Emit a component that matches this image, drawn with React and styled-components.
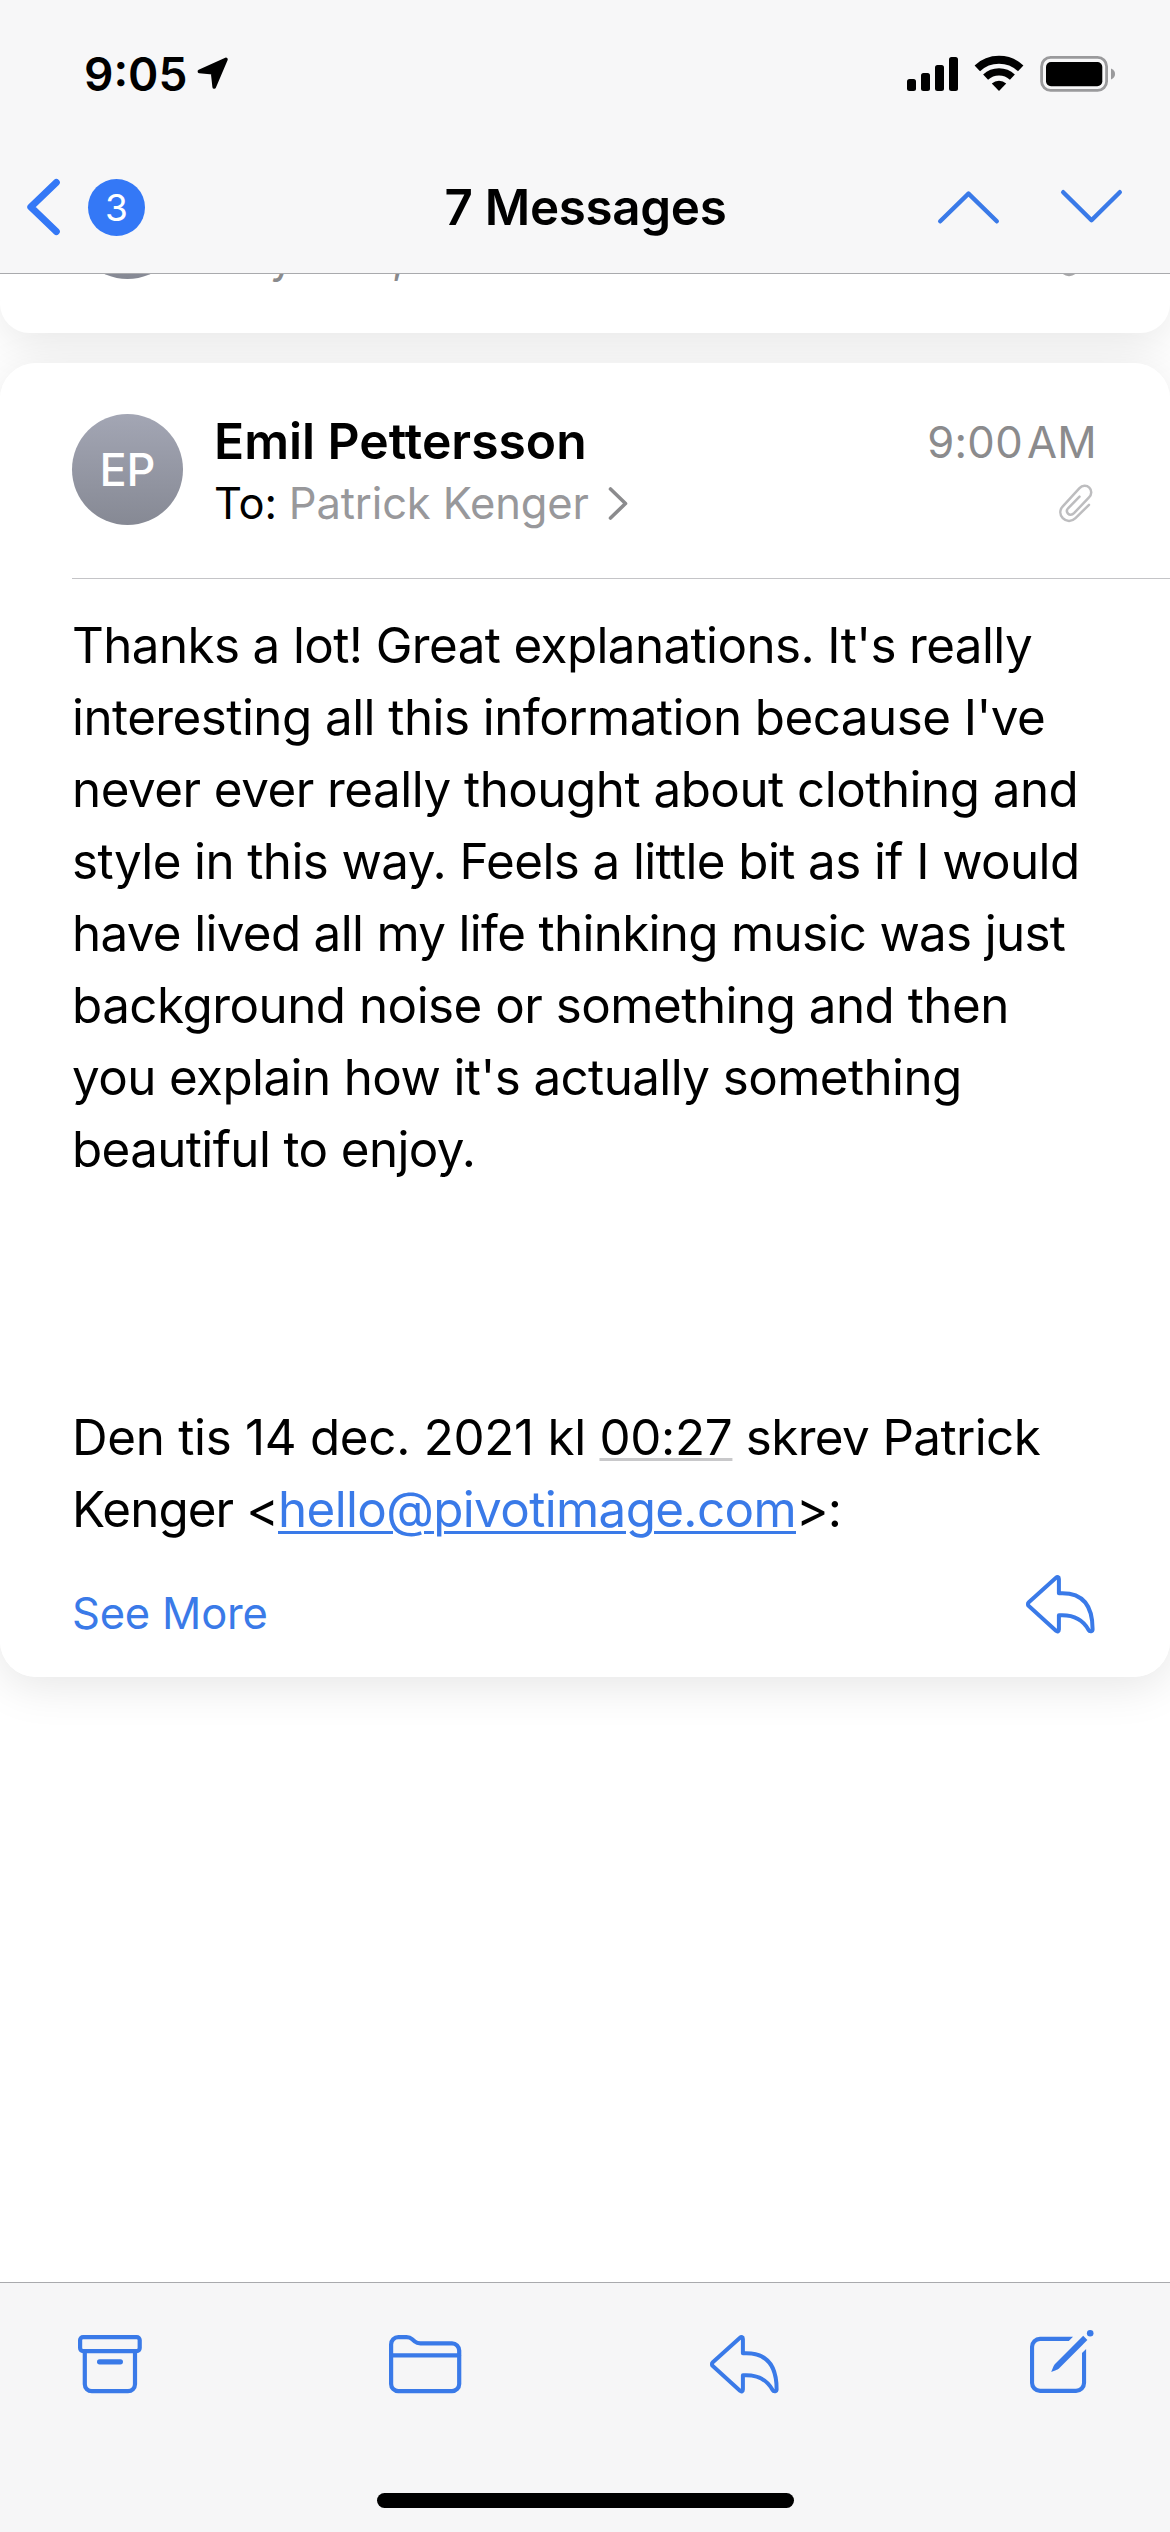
import React from "react";
import styled, { createGlobalStyle } from "styled-components";

const blue = "#3a7ae8";

const GlobalStyle = createGlobalStyle`
  * {
    box-sizing: border-box;
  }
  body {
    margin: 0;
    background: #fff;
  }
`;

const Screen = styled.div`
  width: 1170px;
  height: 2532px;
  display: flex;
  flex-direction: column;
  overflow: hidden;
  background: #fff;
  color: #000;
  font-family: Inter, "Liberation Sans", sans-serif;
  white-space: nowrap;
`;

const Header = styled.header`
  flex: none;
  height: 274px;
  background: #f7f7f8;
  border-bottom: 1px solid #a9aaad;
`;

const StatusBar = styled.div`
  height: 148px;
  padding: 0 54px 0 84px;
  display: flex;
  align-items: center;
  justify-content: space-between;
`;

const StatusGroup = styled.div`
  display: flex;
  align-items: center;
`;

const Clock = styled.span`
  font-size: 46px;
  font-weight: 600;
  line-height: 60px;
  margin-right: 9px;
`;

const NavBar = styled.nav`
  height: 125px;
  padding: 0 47px 7px 25px;
  display: grid;
  grid-template-columns: 1fr auto 1fr;
  align-items: center;
`;

const NavSide = styled.div`
  display: flex;
  align-items: center;
  justify-content: ${(p) => (p.$end ? "flex-end" : "flex-start")};
  gap: ${(p) => p.$gap}px;
`;

const Badge = styled.span`
  width: 57px;
  height: 57px;
  border-radius: 50%;
  display: flex;
  align-items: center;
  justify-content: center;
  background: #3478f6;
  color: #fff;
  font-size: 37px;
`;

const Title = styled.h1`
  margin: 0 0 0 23px;
  font-size: 49.3px;
  font-weight: 600;
  line-height: 64px;
  letter-spacing: -0.3px;
`;

const Thread = styled.main`
  flex: 1;
  min-height: 0;
  display: flex;
  flex-direction: column;
  gap: 30px;
  overflow: hidden;
  isolation: isolate;
`;

/* the shadow sits behind every card, so neighbours never shade each other */
const Card = styled.article`
  flex: none;
  position: relative;
  background: #fff;
  border-radius: ${(p) => (p.$cut ? "0 0 36px 36px" : "36px")};

  &::before {
    content: "";
    position: absolute;
    inset: 0;
    z-index: -1;
    border-radius: 36px;
    box-shadow: 0 9px 46px rgba(0, 0, 0, 0.1);
  }
`;

/* collapsed message, scrolled mostly under the header */
const Peek = styled.div`
  height: 59px;
  padding: 0 72px 0;
  display: flex;
  align-items: flex-end;
  overflow: hidden;
`;

const PeekText = styled.span`
  margin: 0 auto 45px 30px;
  font-size: 43.5px;
  line-height: 62px;
  color: #8a8a8c;
`;

const CardHead = styled.div`
  height: 216px;
  margin-left: 72px;
  padding: 47px 72px 0 0;
  display: flex;
  border-bottom: 1px solid #c4c4c7;
`;

const Avatar = styled.div`
  flex: none;
  width: 111px;
  height: 111px;
  margin: ${(p) => (p.$peek ? "0 0 54px" : "4px 0 0")};
  border-radius: 50%;
  display: flex;
  align-items: center;
  justify-content: center;
  background: linear-gradient(#a3a6b4, #868994);
  color: #fff;
  font-size: 45px;
  font-weight: 500;
`;

const People = styled.div`
  margin-left: 31px;
  flex: 1;
`;

const Name = styled.div`
  font-size: 49.8px;
  font-weight: 600;
  line-height: 62px;
`;

const To = styled.div`
  display: flex;
  align-items: center;
  font-size: 43.5px;
  line-height: 62px;
  letter-spacing: -0.15px;
`;

const Recipient = styled.span`
  margin: 0 19px 0 12px;
  color: #98989b;
`;

const Meta = styled.div`
  display: flex;
  flex-direction: column;
  align-items: flex-end;
`;

const Time = styled.div`
  display: flex;
  gap: 4px;
  margin-top: 2px;
  margin-right: 1px;
  font-size: 43.6px;
  line-height: 62px;
  letter-spacing: 0.3px;
  color: #8b8b8d;
`;

const Clip = styled.svg`
  flex: none;
  margin: ${(p) => (p.$peek ? "0 5px 56px 0" : "10px 5px 0 0")};
  fill: none;
  stroke: ${(p) => (p.$peek ? "#a6a6a8" : "#bdbdbf")};
  stroke-width: 2.5;
  stroke-linecap: round;
`;

const Body = styled.div`
  padding: 30px 72px 0;
  font-size: 49.3px;
  line-height: 72px;
`;

const Line = styled.div`
  height: 72px;
  letter-spacing: ${(p) => p.$track}px;
`;

const Part = styled.span`
  letter-spacing: ${(p) => p.$track}px;
`;

const DataTime = styled(Part)`
  text-decoration: underline 3px #c8c8ca;
  text-underline-offset: 3px;
`;

const Mail = styled.a`
  color: ${blue};
  letter-spacing: -0.62px;
  text-decoration: underline 3px;
  text-underline-offset: 4px;
`;

const CardFoot = styled.div`
  height: 132px;
  padding: 0 71px 14px 72px;
  display: flex;
  align-items: center;
  justify-content: space-between;
`;

const SeeMore = styled.span`
  padding-top: 17px;
  font-size: 43.5px;
  letter-spacing: -0.2px;
  color: ${blue};
`;

const Toolbar = styled.footer`
  flex: none;
  height: 250px;
  border-top: 1px solid #a9aaad;
  background: #f6f6f7;
  display: flex;
  flex-direction: column;
  align-items: center;
  justify-content: space-between;
  padding-bottom: 24px;
`;

const Actions = styled.div`
  width: 100%;
  padding: 47px 76px 0 78px;
  display: flex;
  align-items: flex-end;
  justify-content: space-between;
`;

const HomeBar = styled.div`
  width: 417px;
  height: 15px;
  border-radius: 8px;
  background: #000;
`;

const Stroked = styled.svg`
  display: block;
  overflow: visible;
  fill: none;
  stroke: ${(p) => p.$color || blue};
  stroke-width: ${(p) => p.$w || 4.2};
  stroke-linecap: round;
  stroke-linejoin: round;
`;

const Location = styled.svg`
  display: block;
`;

function Reply() {
  return (
    <Stroked width="73" height="59" viewBox="0 0 73 59" $w={4}>
      <path d="M30 2.7 L2.8 27.2 a2.6 2.6 0 0 0 0 3.9 L30 55.8 c1.4 1.2 2.9.6 2.9-1.2 V40.3 h3.4 C48 40.3 56.5 44 62.6 55 c1.2 2.1 4 1.6 4-.8 C66.6 30 56 18.3 36.3 18.3 H32.9 V3.9 c0-1.8-1.5-2.4-2.9-1.2 z" />
    </Stroked>
  );
}

function Paperclip({ peek }) {
  return (
    <Clip $peek={peek} width="34" height="39" viewBox="0 0 34 39">
      <path d="M30 20.8 L16.5 34.2 C12.7 38 7 37.6 3.8 34.2 C.4 30.4.6 25.8 3.8 22.4 L20.5 4.2 C23.3 1.2 27.6 1.1 30.3 3.6 C33 6.2 32.8 10.6 30 13.4 L15 29.2 C13 31.2 10.5 31.2 9 29.6 C7.5 28 7.6 25.8 9.3 24 L20.5 12.7" />
    </Clip>
  );
}

function StatusIcons() {
  return (
    <svg width="210" height="38" viewBox="906 55 210 38">
      <rect x="907" y="79" width="9" height="12" rx="2.5" />
      <rect x="921" y="73" width="9" height="18" rx="2.5" />
      <rect x="935" y="65" width="9" height="26" rx="2.5" />
      <rect x="949" y="57" width="9" height="34" rx="2.5" />
      <g fill="none" stroke="#000">
        <path d="M977.3 68.3 A31.8 31.8 0 0 1 1020.7 68.3" strokeWidth="8" />
        <path d="M985.6 77.2 A19.6 19.6 0 0 1 1012.4 77.2" strokeWidth="7.2" />
      </g>
      <path d="M991.8 83.6 A10.8 10.8 0 0 1 1006.2 83.6 L999 91 z" />
      <rect x="1041.6" y="57.4" width="65" height="33" rx="9" fill="none" stroke="#9a9a9c" strokeWidth="2.8" />
      <rect x="1046" y="62" width="56.3" height="24.2" rx="5" />
      <path d="M1111 68.5 C1116.4 70.5 1116.4 77.5 1111 79.5 z" fill="#9a9a9c" />
    </svg>
  );
}

const paragraph = [
  ["Thanks a lot! Great explanations. It's really", -0.59],
  ["interesting all this information because I've", -0.52],
  ["never ever really thought about clothing and", -0.49],
  ["style in this way. Feels a little bit as if I would", -0.58],
  ["have lived all my life thinking music was just", -0.66],
  ["background noise or something and then", -0.49],
  ["you explain how it's actually something", -0.57],
  ["beautiful to enjoy.", -0.6],
];

export default function App() {
  return (
    <Screen>
      <GlobalStyle />
      <Header>
        <StatusBar>
          <StatusGroup>
            <Clock>9:05</Clock>
            <Location width="33" height="34" viewBox="0 0 33 34">
              <path
                d="M30 2.4 L3.4 14.4 L16.6 15.6 L18.2 30 z"
                fill="#000"
                stroke="#000"
                strokeWidth="3.6"
                strokeLinejoin="round"
              />
            </Location>
          </StatusGroup>
          <StatusIcons />
        </StatusBar>
        <NavBar>
          <NavSide $gap={28}>
            <Stroked width="35" height="58" viewBox="0 0 35 58" $w={7} $color="#3478f6">
              <path d="M31.3 4.5 L5.8 29 L31.3 53.5" />
            </Stroked>
            <Badge>3</Badge>
          </NavSide>
          <Title>7 Messages</Title>
          <NavSide $end $gap={60}>
            <Stroked width="63" height="34" viewBox="0 0 63 34" $w={4.4}>
              <path d="M3.2 31.3 L31.5 3.6 L59.8 31.3" />
            </Stroked>
            <Stroked width="63" height="34" viewBox="0 0 63 34" $w={4.4}>
              <path d="M3.2 2.2 L31.5 30.2 L59.8 2.2" />
            </Stroked>
          </NavSide>
        </NavBar>
      </Header>

      <Thread>
        <Card $cut>
          <Peek>
            <Avatar $peek />
            <PeekText>Hey Emil, Great to hear that it all</PeekText>
            <Paperclip peek />
          </Peek>
        </Card>

        <Card>
          <CardHead>
            <Avatar>EP</Avatar>
            <People>
              <Name>Emil Pettersson</Name>
              <To>
                To:<Recipient>Patrick Kenger</Recipient>
                <Stroked width="20" height="34" viewBox="0 0 20 34" $w={3.6} $color="#8b8b8d">
                  <path d="M2.5 3 L17.5 17.5 L2.5 32" />
                </Stroked>
              </To>
            </People>
            <Meta>
              <Time>
                <span>9:00</span>
                <span>AM</span>
              </Time>
              <Paperclip />
            </Meta>
          </CardHead>

          <Body>
            {paragraph.map(([text, track]) => (
              <Line key={text} $track={track}>
                {text}
              </Line>
            ))}
            <Line />
            <Line />
            <Line />
            <Line>
              <Part $track={-0.28}>Den tis 14 dec. 2021 kl </Part>
              <DataTime $track={-0.28}>00:27</DataTime>
              <Part $track={-0.58}> skrev Patrick</Part>
            </Line>
            <Line $track={-0.88}>
              Kenger &lt;<Mail>hello@pivotimage.com</Mail>&gt;:
            </Line>
          </Body>

          <CardFoot>
            <SeeMore>See More</SeeMore>
            <Reply />
          </CardFoot>
        </Card>
      </Thread>

      <Toolbar>
        <Actions>
          <Stroked width="64" height="59" viewBox="0 0 64 59">
            <rect x="2.1" y="2.1" width="59.6" height="14" rx="3" />
            <path d="M6.8 16 V49.2 a7 7 0 0 0 7 7 H50 a7 7 0 0 0 7-7 V16" />
            <path d="M21.6 26.8 H42.4" strokeWidth="5.2" />
          </Stroked>
          <Stroked width="73" height="59" viewBox="0 0 73 59">
            <path d="M2.1 49 V9.4 a7.2 7.2 0 0 1 7.2-7.2 H17.6 c2.6 0 3.9.5 5.6 2 l2.6 2.3 c1.7 1.5 3 1.9 5.6 1.9 H63 a7.2 7.2 0 0 1 7.2 7.2 V49 a7.2 7.2 0 0 1-7.2 7.2 H9.3 A7.2 7.2 0 0 1 2.1 49 z" />
            <path d="M2.5 20.4 H70" />
          </Stroked>
          <Reply />
          <Stroked width="64" height="64" viewBox="0 0 64 64">
            <path d="M43 6.7 L38.8 10.9 H10.1 a6 6 0 0 0-6 6 V52.8 a6 6 0 0 0 6 6 H46 a6 6 0 0 0 6-6 V23 L56.1 18.9 V53 a10 10 0 0 1-10 10 H10 A10 10 0 0 1 0 53 V16.7 A10 10 0 0 1 10 6.7 z" fill={blue} stroke="none" />
            <path d="M53.2 5.8 L57.4 10 L29.2 38.2 C28 39.3 26.6 39.9 21.2 42 C23.2 36.6 23.9 35.2 25 34 z" fill={blue} stroke="none" />
            <circle cx="60.2" cy="3.2" r="3.3" fill={blue} stroke="none" />
          </Stroked>
        </Actions>
        <HomeBar />
      </Toolbar>
    </Screen>
  );
}
